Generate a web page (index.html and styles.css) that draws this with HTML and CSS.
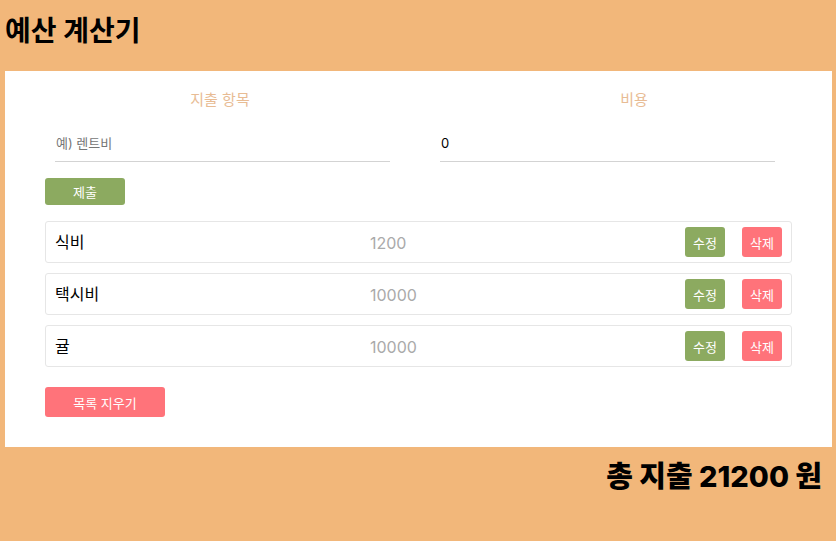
FILE: index.html
```html
<!DOCTYPE html>
<html lang="ko">
<head>
<meta charset="utf-8">
<title>예산 계산기</title>
<link rel="stylesheet" href="styles.css">
</head>
<body>
<div class="app">
  <h1 class="title">예산 계산기</h1>
  <main class="card">
    <form class="form">
      <div class="fields">
        <div class="field field-name">
          <label class="label">지출 항목</label>
          <input class="input" type="text" placeholder="예) 렌트비">
        </div>
        <div class="field field-cost">
          <label class="label">비용</label>
          <input class="input" type="number" value="0">
        </div>
      </div>
      <button type="button" class="btn btn-green btn-submit">제출</button>
    </form>
    <ul class="list">
      <li class="item">
        <span class="item-name">식비</span>
        <span class="item-cost">1200</span>
        <div class="item-actions">
          <button class="btn btn-green btn-sm">수정</button>
          <button class="btn btn-red btn-sm">삭제</button>
        </div>
      </li>
      <li class="item">
        <span class="item-name">택시비</span>
        <span class="item-cost">10000</span>
        <div class="item-actions">
          <button class="btn btn-green btn-sm">수정</button>
          <button class="btn btn-red btn-sm">삭제</button>
        </div>
      </li>
      <li class="item">
        <span class="item-name">귤</span>
        <span class="item-cost">10000</span>
        <div class="item-actions">
          <button class="btn btn-green btn-sm">수정</button>
          <button class="btn btn-red btn-sm">삭제</button>
        </div>
      </li>
    </ul>
    <button type="button" class="btn btn-red btn-clear">목록 지우기</button>
  </main>
  <p class="total">총 지출 21200 원</p>
</div>
</body>
</html>
```

FILE: styles.css
```css
* { box-sizing: border-box; }
html, body {
  margin: 0;
  padding: 0;
  background: #f2b77a;
  height: 100%;
}
body {
  font-family: Inter, "Noto Sans CJK KR", sans-serif;
  color: #000;
}
.app {
  padding: 0 4px 0 5px;
}
.title {
  margin: 0;
  height: 71px;
  padding-top: 13px;
  font-size: 28px;
  line-height: 36px;
  font-weight: 700;
}
.card {
  background: #fff;
  padding: 17px 40px 30px 40px;
}
.fields {
  display: flex;
}
.field {
  display: flex;
  flex-direction: column;
  flex-shrink: 0;
}
.field-name {
  width: 350px;
  padding-left: 10px;
}
.field-cost {
  width: 352px;
  margin-left: 45px;
}
.field-cost .input { width: 335px; }
.field-name .input { width: 335px; }
.label {
  text-align: center;
  font-size: 15px;
  line-height: 24px;
  color: #e8bc94;
  height: 24px;
}
.field-name .label { padding-right: 10px; }
.field-cost .label { padding-left: 36px; }
.input {
  margin-top: 20px;
  border: none;
  border-bottom: 1px solid #d3d3d3;
  outline: none;
  font-family: inherit;
  font-size: 13px;
  height: 30px;
  padding: 0 0 8px 1px;
  color: #000;
  background: transparent;
}
.input::placeholder { color: #767676; }
.input::-webkit-outer-spin-button,
.input::-webkit-inner-spin-button { -webkit-appearance: none; margin: 0; }
.btn {
  border: none;
  border-radius: 3px;
  color: #fff;
  font-family: inherit;
  font-size: 13px;
  cursor: pointer;
  padding: 0;
}
.btn-green { background: #8caa60; }
.btn-red { background: #ff737a; }
.btn-submit {
  margin-top: 16px;
  width: 80px;
  height: 27px;
}
.list {
  list-style: none;
  margin: 16px 0 0 0;
  padding: 0;
  display: flex;
  flex-direction: column;
  gap: 10px;
}
.item {
  display: flex;
  align-items: center;
  height: 42px;
  border: 1px solid #e6e6e6;
  border-radius: 3px;
  padding: 0 9px 2px 9px;
}
.item-name {
  width: 315px;
  font-size: 16px;
}
.item-cost {
  flex: 1;
  font-size: 16px;
  color: #aaaaaa;
  padding-top: 3px;
}
.item-actions {
  display: flex;
  gap: 17px;
  margin-top: 2px;
}
.btn-sm {
  width: 40px;
  height: 30px;
}
.btn-clear {
  margin-top: 20px;
  width: 120px;
  height: 30px;
}
.total {
  margin: 0;
  text-align: right;
  padding: 12px 10px 0 0;
  font-size: 29px;
  line-height: 36px;
  font-weight: 800;
}
```
